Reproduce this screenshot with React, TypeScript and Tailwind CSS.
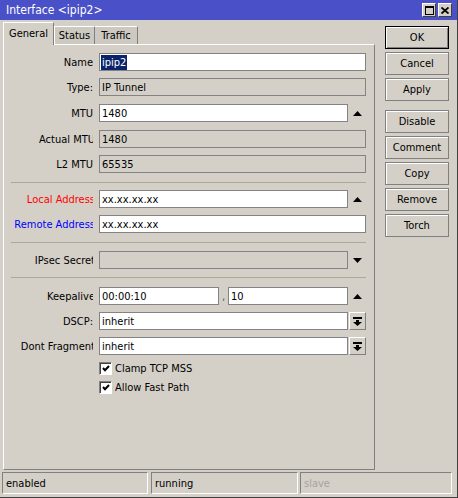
import React from "react";

const UpTri = () => (
  <svg width="9" height="5" viewBox="0 0 9 5">
    <polygon points="4.5,0 9,5 0,5" fill="#000" />
  </svg>
);
const DownTri = () => (
  <svg width="9" height="5" viewBox="0 0 9 5">
    <polygon points="0,0 9,0 4.5,5" fill="#000" />
  </svg>
);

function Label({
  text,
  color = "text-black",
  clip = false,
}: {
  text: string;
  color?: string;
  clip?: boolean;
}) {
  return (
    <div className={`w-[89px] shrink-0 overflow-hidden whitespace-nowrap text-right ${color}`}>
      <span className={clip ? "inline-block mr-[-2px]" : "inline-block"}>{text}</span>
    </div>
  );
}

function Field({
  children,
  ro = false,
  w,
}: {
  children?: React.ReactNode;
  ro?: boolean;
  w: string;
}) {
  return (
    <div
      className={`h-[18px] ${w} shrink-0 border border-[#848284] flex items-center pl-[2px] whitespace-nowrap overflow-hidden ${
        ro ? "bg-[#d4d0c8]" : "bg-white"
      }`}
    >
      {children}
    </div>
  );
}

function Row({ mt, children }: { mt: string; children: React.ReactNode }) {
  return <div className={`flex items-center h-[18px] ${mt}`}>{children}</div>;
}

const Sep = ({ mt }: { mt: string }) => (
  <div className={`h-px w-[355px] ml-[7px] bg-[#aca899] ${mt}`} />
);

const ArrowCol = ({ children }: { children: React.ReactNode }) => (
  <div className="w-[17px] ml-[1px] h-[18px] flex items-center justify-center">{children}</div>
);

const DropBtn = () => (
  <div className="w-[17px] ml-[1px] h-[18px] flex items-center justify-center bg-[#d4d0c8] border border-t-white border-l-white border-r-[#808080] border-b-[#808080]">
    <svg width="9" height="9" viewBox="0 0 9 9">
      <rect x="0" y="0" width="9" height="2" fill="#000" />
      <rect x="3" y="3" width="3" height="2" fill="#000" />
      <polygon points="0,5 9,5 4.5,9" fill="#000" />
    </svg>
  </div>
);

function Check({ label, mt }: { label: string; mt: string }) {
  return (
    <div className={`flex items-center h-[13px] ml-[95px] ${mt}`}>
      <div className="w-[13px] h-[13px] bg-white border border-t-[#808080] border-l-[#808080] border-r-white border-b-white shadow-[inset_1px_1px_0_#404040] flex items-center justify-center">
        <svg width="8" height="7" viewBox="0 0 8 7">
          <polyline points="1,3 3,5.2 7,1" fill="none" stroke="#000" strokeWidth="2" />
        </svg>
      </div>
      <span className="ml-[3px]">{label}</span>
    </div>
  );
}

function Btn({ label, def = false, mt }: { label: string; def?: boolean; mt: string }) {
  return (
    <div
      className={`h-[23px] w-[64px] flex items-center justify-center ${mt} ${
        def
          ? "border border-black shadow-[inset_1px_1px_0_#ffffff,inset_-1px_-1px_0_#808080]"
          : "border border-[#808080] shadow-[inset_1px_1px_0_#ffffff]"
      }`}
    >
      {label}
    </div>
  );
}

export default function App() {
  return (
    <div className="w-[458px] h-[498px] bg-[#d4d0c8] font-['DejaVu_Sans_Condensed','DejaVu_Sans',sans-serif] text-[11px] leading-none text-black border-r border-b border-[#404040] flex flex-col overflow-hidden">
      {/* Title bar */}
      <div className="h-[20px] shrink-0 bg-[#4a50c8] flex items-center justify-between">
        <span className="pl-[6px] text-white text-[12px]">Interface &lt;ipip2&gt;</span>
        <div className="flex gap-[2px] mr-[5px]">
          <div className="w-[14px] h-[14px] bg-[#d4d0c8] border border-t-white border-l-white border-r-[#404040] border-b-[#404040] flex items-center justify-center">
            <svg width="9" height="9" viewBox="0 0 9 9">
              <rect x="0.5" y="0.5" width="8" height="8" fill="none" stroke="#000" />
              <rect x="0" y="0" width="9" height="2" fill="#000" />
            </svg>
          </div>
          <div className="w-[14px] h-[14px] bg-[#d4d0c8] border border-t-white border-l-white border-r-[#404040] border-b-[#404040] flex items-center justify-center">
            <svg width="8" height="7" viewBox="0 0 8 7">
              <path d="M0.5 0.5 L7.5 6.5 M7.5 0.5 L0.5 6.5" stroke="#000" strokeWidth="1.8" />
            </svg>
          </div>
        </div>
      </div>

      <div className="flex">
        {/* Left */}
        <div className="ml-[3px] mt-[2px] w-[372px] flex flex-col">
          <div className="h-[22px] flex items-end">
            <div className="relative z-10 h-[23px] -mb-px w-[51px] bg-[#d4d0c8] border-l border-t border-r border-l-white border-t-white border-r-[#808080] flex items-center justify-center pb-[1px]">
              General
            </div>
            <div className="h-[18px] w-[41px] bg-[#cdc9c1] border-l border-t border-r border-l-white border-t-white border-r-[#808080] flex items-center justify-center">
              Status
            </div>
            <div className="h-[18px] w-[43px] bg-[#cdc9c1] border-t border-r border-t-white border-r-[#808080] flex items-center justify-center">
              Traffic
            </div>
          </div>
          <div className="h-[426px] border border-l-white border-t-white border-r-[#808080] border-b-[#808080] pt-[8px] flex flex-col">
            <Row mt="mt-0">
              <Label text="Name" />
              <div className="ml-[6px]">
                <Field w="w-[267px]">
                  <span className="bg-[#0a246a] text-white -ml-px pl-px pr-[1px] py-[2px]">ipip2</span>
                </Field>
              </div>
            </Row>
            <Row mt="mt-[7px]">
              <Label text="Type:" />
              <div className="ml-[6px]">
                <Field w="w-[267px]" ro>
                  IP Tunnel
                </Field>
              </div>
            </Row>
            <Row mt="mt-[8px]">
              <Label text="MTU" />
              <div className="ml-[6px] flex">
                <Field w="w-[249px]">1480</Field>
                <ArrowCol>
                  <UpTri />
                </ArrowCol>
              </div>
            </Row>
            <Row mt="mt-[8px]">
              <Label text="Actual MTU" clip />
              <div className="ml-[6px]">
                <Field w="w-[267px]" ro>
                  1480
                </Field>
              </div>
            </Row>
            <Row mt="mt-[7px]">
              <Label text="L2 MTU" />
              <div className="ml-[6px]">
                <Field w="w-[267px]" ro>
                  65535
                </Field>
              </div>
            </Row>
            <Sep mt="mt-[9px]" />
            <Row mt="mt-[7px]">
              <Label text="Local Address" color="text-[#ff0000]" clip />
              <div className="ml-[6px] flex">
                <Field w="w-[249px]">xx.xx.xx.xx</Field>
                <ArrowCol>
                  <UpTri />
                </ArrowCol>
              </div>
            </Row>
            <Row mt="mt-[7px]">
              <Label text="Remote Address" color="text-[#0000ff]" clip />
              <div className="ml-[6px]">
                <Field w="w-[267px]">xx.xx.xx.xx</Field>
              </div>
            </Row>
            <Sep mt="mt-[9px]" />
            <Row mt="mt-[8px]">
              <Label text="IPsec Secret" clip />
              <div className="ml-[6px] flex">
                <Field w="w-[249px]" ro />
                <ArrowCol>
                  <DownTri />
                </ArrowCol>
              </div>
            </Row>
            <Sep mt="mt-[8px]" />
            <Row mt="mt-[9px]">
              <Label text="Keepalive" clip />
              <div className="ml-[6px] flex items-center">
                <Field w="w-[120px]">00:00:10</Field>
                <div className="w-[9px] h-[18px] flex items-end justify-center pb-[3px] text-[#3050a0]">,</div>
                <Field w="w-[120px]">10</Field>
                <ArrowCol>
                  <UpTri />
                </ArrowCol>
              </div>
            </Row>
            <Row mt="mt-[7px]">
              <Label text="DSCP:" />
              <div className="ml-[6px] flex">
                <Field w="w-[249px]">inherit</Field>
                <DropBtn />
              </div>
            </Row>
            <Row mt="mt-[7px]">
              <Label text="Dont Fragment" clip />
              <div className="ml-[6px] flex">
                <Field w="w-[249px]">inherit</Field>
                <DropBtn />
              </div>
            </Row>
            <Check label="Clamp TCP MSS" mt="mt-[7px]" />
            <Check label="Allow Fast Path" mt="mt-[6px]" />
          </div>
        </div>

        {/* Right buttons */}
        <div className="ml-[10px] mt-[6px] flex flex-col">
          <Btn label="OK" def mt="mt-0" />
          <Btn label="Cancel" mt="mt-[3px]" />
          <Btn label="Apply" mt="mt-[3px]" />
          <Btn label="Disable" mt="mt-[9px]" />
          <Btn label="Comment" mt="mt-[3px]" />
          <Btn label="Copy" mt="mt-[3px]" />
          <Btn label="Remove" mt="mt-[3px]" />
          <Btn label="Torch" mt="mt-[3px]" />
        </div>
      </div>

      {/* Status bar */}
      <div className="flex mt-[2px] h-[22px]">
        <div className="ml-[2px] w-[146px] h-[22px] border border-t-[#808080] border-l-[#808080] border-r-white border-b-white flex items-center pl-[3px]">
          enabled
        </div>
        <div className="ml-[3px] w-[147px] h-[22px] border border-t-[#808080] border-l-[#808080] border-r-white border-b-white flex items-center pl-[3px]">
          running
        </div>
        <div className="ml-[2px] w-[152px] h-[22px] border border-t-[#808080] border-l-[#808080] border-r-white border-b-white flex items-center pl-[3px] text-[#a8a49c]">
          slave
        </div>
      </div>
    </div>
  );
}
